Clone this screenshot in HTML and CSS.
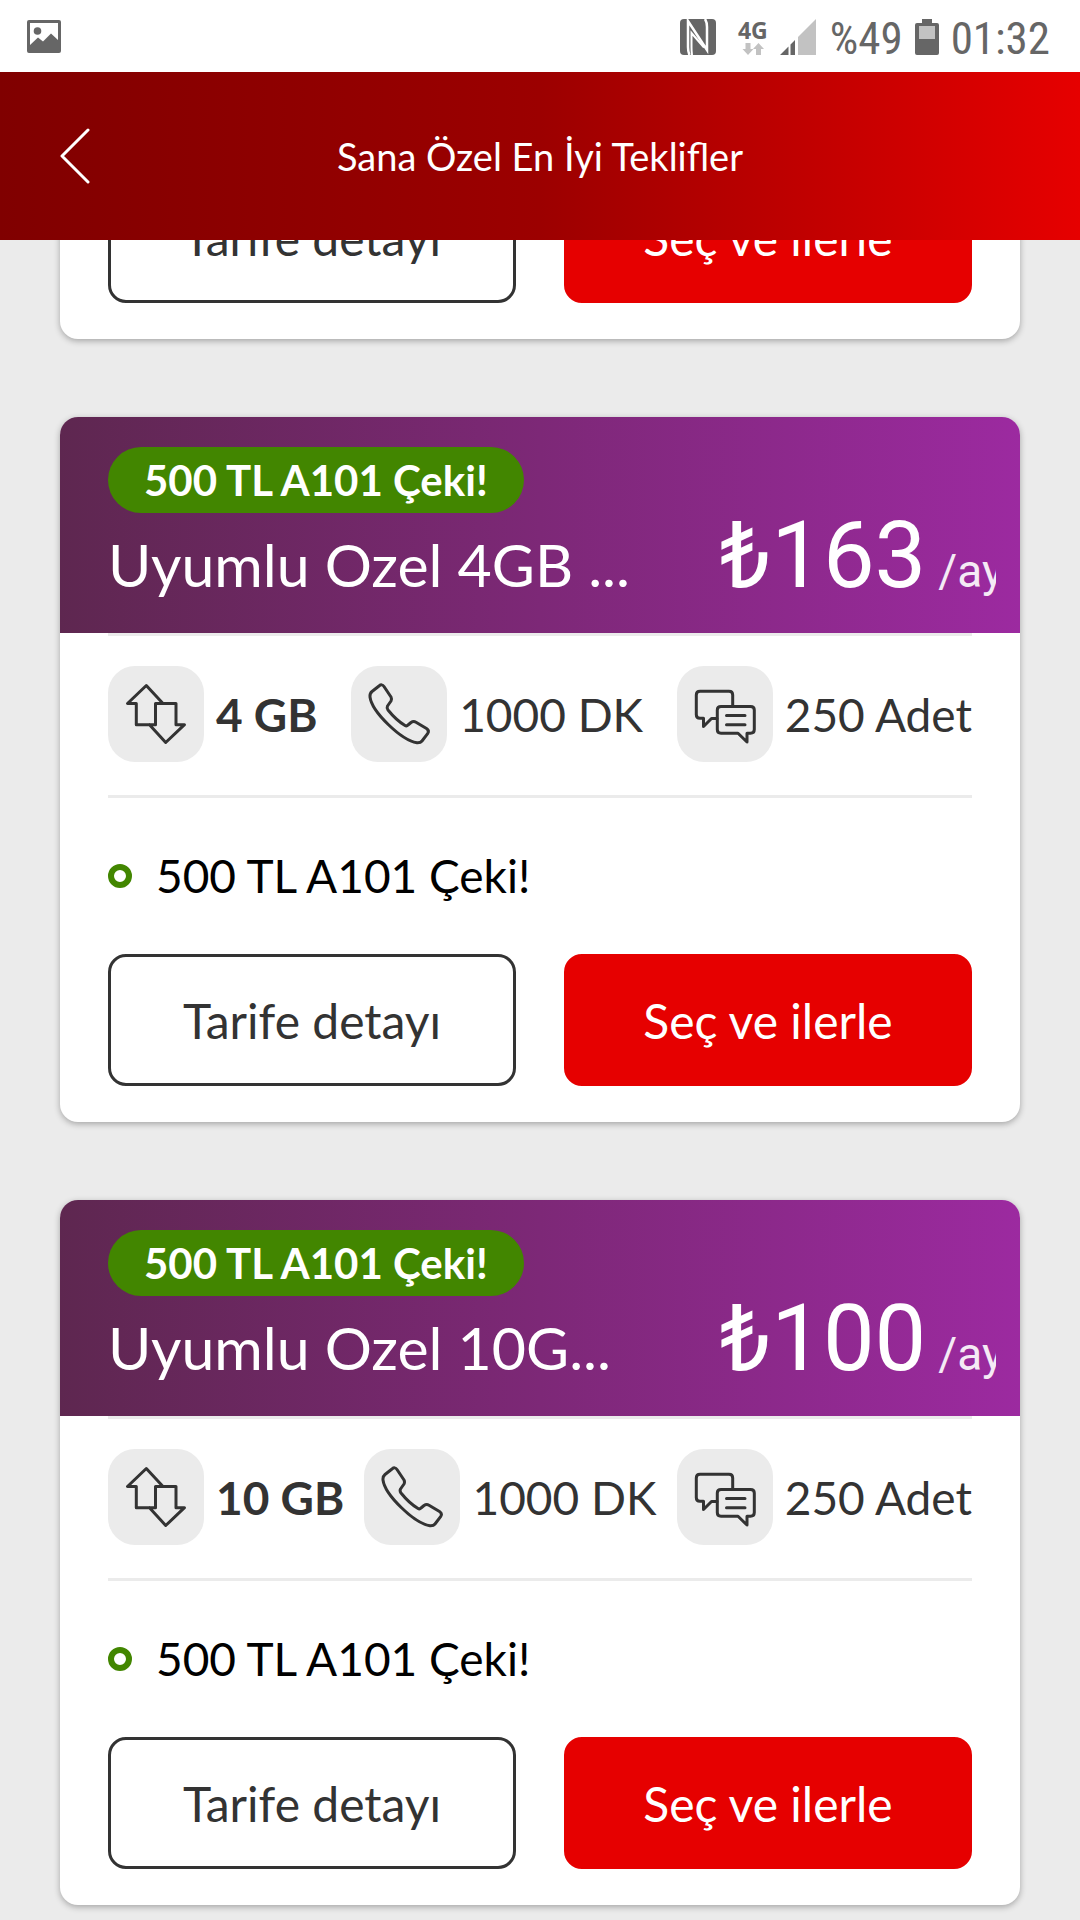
FILE: index.html
```html
<!DOCTYPE html>
<html lang="tr">
<head>
<meta charset="utf-8">
<meta name="viewport" content="width=device-width, initial-scale=1">
<title>Sana Özel En İyi Teklifler</title>
<link rel="stylesheet" href="styles.css">
</head>
<body>
<svg class="sprite" aria-hidden="true">
  <symbol id="data" viewBox="0 0 96 96">
    <path d="M55 37.5L38.3 19.5L19.5 37.5H28.3V58.7H47.5V37.5H68V58.7H76.5L57.7 76.5L41.5 58.7"/>
  </symbol>
  <symbol id="phone" viewBox="0 0 96 96">
    <path d="M28 20Q31 17.5 33 20.5L40 31Q41 33 40 35L36.5 40Q35.5 42 37 44Q45 54 54 59.5Q55.7 60.5 57 59L60 56.500Q62.500 54.800 65 56.200L75.500 62.500Q78.500 64.500 76.800 67.300L71 75Q69.500 77 66 76.800C50 74 21 46 19 31Q18.600 27.500 21 25.500Z"/>
  </symbol>
  <symbol id="chat" viewBox="0 0 96 96">
    <path d="M55.700 40V29Q55.700 25.300 52 25.300H23Q19.300 25.300 19.300 29V48.500Q19.300 52.300 23 52.300H26.500V60.500L34.500 52.500H40"/>
    <path d="M44 40.500H73.500Q77.300 40.500 77.300 44V63.500Q77.300 67.200 73.500 67.200H70V76L61 67.200H44Q40.300 67.200 40.300 63.500V44Q40.300 40.500 44 40.500Z"/>
    <path d="M49.500 49.500H68M49.500 58.700H68"/>
  </symbol>
</svg>

<div class="status">
  <svg class="status-picture" width="36" height="36" viewBox="0 0 36 36" aria-hidden="true">
    <path fill="#666" fill-rule="evenodd" d="M3 1H33Q35 1 35 3V32Q35 34 33 34H3Q1 34 1 32V3Q1 1 3 1ZM4 4V26L12 18.500L17 22.500L25 14.500L32 21V4Z"/>
    <circle cx="11.500" cy="12" r="3.800" fill="#666"/>
  </svg>
  <svg class="status-nfc" width="36" height="36" viewBox="0 0 36 36" aria-hidden="true">
    <rect width="36" height="36" rx="4" fill="#666"/>
    <path d="M9.500 36Q8 33 8 28V2L27 31V8Q27 3 25 0" fill="none" stroke="#fff" stroke-width="2.500"/>
    <path d="M12 36Q11.500 32 11.500 28V14L24 28.500" fill="none" stroke="#fff" stroke-width="2"/>
  </svg>
  <div class="network">
    <span>4G</span>
    <svg width="22" height="12" viewBox="0 0 22 12" aria-hidden="true" fill="#c2c2c2">
      <path d="M3.500 0H8.500V6H11.500L6 12L0.500 6H3.500ZM14 12V6H11L16.500 0L22 6H19V12Z"/>
    </svg>
  </div>
  <svg class="status-signal" width="36" height="36" viewBox="0 0 36 36" aria-hidden="true">
    <path d="M0 36L8.500 27.500V36ZM10.500 25.500L15 21V36H10.500Z" fill="#666"/>
    <path d="M18 18L36 0V36H18Z" fill="#c2c2c2"/>
  </svg>
  <span class="status-text">%49</span>
  <svg class="status-battery" width="24" height="36" viewBox="0 0 24 36" aria-hidden="true">
    <path d="M7 0H17V4H22Q24 4 24 6V34Q24 36 22 36H2Q0 36 0 34V6Q0 4 2 4H7Z" fill="#666"/>
    <path d="M4 7H20V20H4Z" fill="#c2c2c2"/>
  </svg>
  <span class="status-text">01:32</span>
</div>

<header class="topbar">
  <button class="back" type="button" aria-label="Geri">
    <svg width="30" height="56" viewBox="0 0 30 56" aria-hidden="true">
      <path d="M28 2L2 28L28 54" fill="none" stroke="#fff" stroke-width="3" stroke-linecap="round" stroke-linejoin="round"/>
    </svg>
  </button>
  <h1>Sana Özel En İyi Teklifler</h1>
</header>

<main class="offers">
  <article class="card">
    <div class="actions">
      <button class="btn" type="button">Tarife detayı</button>
      <button class="btn btn-primary" type="button">Seç ve ilerle</button>
    </div>
  </article>

  <article class="card">
    <div class="card-head">
      <span class="pill">500 TL A101 Çeki!</span>
      <div class="card-title">
        <h2>Uyumlu Ozel 4GB ...</h2>
        <p class="price">₺163<span class="period">/ay</span></p>
      </div>
    </div>
    <div class="usage">
      <div class="quota quota-main"><svg class="icon" aria-hidden="true"><use href="#data"/></svg>4 GB</div>
      <div class="quota"><svg class="icon" aria-hidden="true"><use href="#phone"/></svg>1000 DK</div>
      <div class="quota"><svg class="icon" aria-hidden="true"><use href="#chat"/></svg>250 Adet</div>
    </div>
    <ul class="perks"><li>500 TL A101 Çeki!</li></ul>
    <div class="actions">
      <button class="btn" type="button">Tarife detayı</button>
      <button class="btn btn-primary" type="button">Seç ve ilerle</button>
    </div>
  </article>

  <article class="card">
    <div class="card-head">
      <span class="pill">500 TL A101 Çeki!</span>
      <div class="card-title">
        <h2>Uyumlu Ozel 10G...</h2>
        <p class="price">₺100<span class="period">/ay</span></p>
      </div>
    </div>
    <div class="usage">
      <div class="quota quota-main"><svg class="icon" aria-hidden="true"><use href="#data"/></svg>10 GB</div>
      <div class="quota"><svg class="icon" aria-hidden="true"><use href="#phone"/></svg>1000 DK</div>
      <div class="quota"><svg class="icon" aria-hidden="true"><use href="#chat"/></svg>250 Adet</div>
    </div>
    <ul class="perks"><li>500 TL A101 Çeki!</li></ul>
    <div class="actions">
      <button class="btn" type="button">Tarife detayı</button>
      <button class="btn btn-primary" type="button">Seç ve ilerle</button>
    </div>
  </article>
</main>
</body>
</html>
```
FILE: styles.css
```css
*,
*::before {
  box-sizing: border-box;
}

body {
  margin: 0;
  background: #ebebeb;
  color: #333;
  font-family: Lato, "Noto Sans", sans-serif;
  font-size: 46px;
}

h1, h2, p, ul {
  margin: 0;
  padding: 0;
  font-weight: 400;
}

.sprite {
  display: none;
}

/* Status bar */
.status {
  position: relative;
  z-index: 1;
  display: flex;
  align-items: center;
  height: 72px;
  padding: 2px 30px 0 26px;
  background: #fff;
  color: #666;
}

.status-nfc {
  margin-left: auto;
}

.network {
  display: flex;
  flex-direction: column;
  align-items: center;
  gap: 2px;
  margin: 0 12px 0 22px;
  font: 700 23px/22px "Noto Sans", sans-serif;
}

.status-signal {
  margin-right: 14px;
}

.status-battery {
  margin: 0 12px;
}

.status-text {
  padding-top: 3px;
  font: 45px/54px "Roboto Condensed", Roboto, sans-serif;
}

/* Title bar */
.topbar {
  position: relative;
  z-index: 1;
  display: grid;
  grid-template-columns: 1fr auto 1fr;
  align-items: center;
  height: 168px;
  background: linear-gradient(90deg, #800000, #9c0000 50%, #e60000);
  color: #fff;
}

.topbar h1 {
  font-size: 38px;
  line-height: 48px;
}

.back {
  display: flex;
  justify-self: start;
  margin-left: 36px;
  padding: 24px;
  border: 0;
  background: none;
}

/* Offer list, scrolled under the title bar */
.offers {
  display: flex;
  flex-direction: column;
  gap: 78px;
  margin-top: -69px;
  padding: 0 60px 15px;
}

.card {
  overflow: hidden;
  border-radius: 18px;
  background: #fff;
  box-shadow: 0 2px 6px rgba(0, 0, 0, 0.3);
}

.card-head {
  min-height: 216px;
  padding: 30px 24px 0 48px;
  background: linear-gradient(90deg, #5e2750, #7d2877 50%, #9c2aa0);
  color: #fff;
}

.pill {
  display: block;
  width: fit-content;
  padding: 0 36px;
  border-radius: 33px;
  background: #428600;
  font-size: 42px;
  font-weight: 700;
  line-height: 66px;
}

.card-title {
  display: flex;
  align-items: baseline;
  justify-content: space-between;
}

.card-title h2 {
  font-size: 59px;
  line-height: 86px;
  white-space: nowrap;
}

.price {
  flex: 0 0 276px;
  overflow: hidden;
  font-family: Roboto, sans-serif;
  font-size: 92px;
  line-height: 86px;
  white-space: nowrap;
}

.period {
  margin-left: 12px;
  font-size: 46px;
  opacity: 0.9;
}

.usage {
  display: flex;
  justify-content: space-between;
  margin: 0 48px;
  padding: 30px 0 33px;
  border-top: 3px solid #ebebeb;
  border-bottom: 3px solid #ebebeb;
}

.quota {
  display: flex;
  align-items: center;
  gap: 12px;
  white-space: nowrap;
}

.quota-main {
  font-weight: 700;
}

.icon {
  width: 96px;
  height: 96px;
  border-radius: 27px;
  background: #ebebeb;
  fill: none;
  stroke: #333;
  stroke-width: 3;
  stroke-linejoin: round;
  stroke-linecap: round;
}

.perks {
  padding: 42px 48px;
  color: #000;
  line-height: 72px;
  list-style: none;
}

.perks li {
  display: flex;
  align-items: center;
  gap: 24px;
}

.perks li::before {
  content: "";
  width: 24px;
  height: 24px;
  border: 6px solid #428600;
  border-radius: 50%;
}

.actions {
  display: grid;
  grid-template-columns: 1fr 1fr;
  gap: 48px;
  padding: 0 48px 36px;
}

.btn {
  height: 132px;
  border: 3px solid #333;
  border-radius: 18px;
  background: #fff;
  color: #333;
  font: 400 48px Lato, "Noto Sans", sans-serif;
}

.btn-primary {
  border-color: #e60000;
  background: #e60000;
  color: #fff;
}
```
